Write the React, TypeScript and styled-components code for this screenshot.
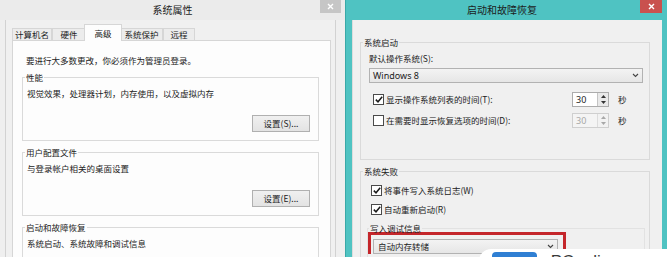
import React from "react";
import styled, { createGlobalStyle } from "styled-components";

const Global = createGlobalStyle`
  html, body { margin: 0; padding: 0; background: #ffffff; }
  body {
    font-family: "Noto Sans CJK SC", "Noto Sans", sans-serif;
    font-size: 8.5px;
    color: #222222;
  }
  * { box-sizing: border-box; }
`;

const Screen = styled.div`
  position: relative;
  display: flex;
  width: 667px;
  height: 257px;
  overflow: hidden;
  background: #f0f0f0;
`;

/* ---------- window chrome ---------- */

const LeftWindow = styled.div`
  width: 345px;
  flex: none;
  display: flex;
  flex-direction: column;
  background: #efefef;
`;

const RightWindow = styled.div`
  flex: 1;
  display: flex;
  flex-direction: column;
  background: #4fc3c2;
  border-left: 1px solid #3aa9a8;
  padding: 0 5px 0 6px;
`;

const TitleBar = styled.div<{ $active?: boolean }>`
  height: 20px;
  flex: none;
  display: grid;
  grid-template-columns: 1fr auto 1fr;
  align-items: center;
  padding-right: ${(p) => (p.$active ? 10 : 0)}px;
  background: ${(p) => (p.$active ? "#4fc3c2" : "#ebebeb")};
`;

const Title = styled.div`
  grid-column: 2;
  font-size: 10px;
  line-height: 12px;
  color: #1c1c1c;
`;

const Close = styled.div<{ $active?: boolean }>`
  grid-column: 3;
  justify-self: end;
  align-self: start;
  width: ${(p) => (p.$active ? 22 : 21)}px;
  height: 13px;
  margin-right: ${(p) => (p.$active ? -10 : 4)}px;
  display: flex;
  align-items: center;
  justify-content: center;
  background: ${(p) => (p.$active ? "#c9514e" : "#c6c6c6")};
`;

const CloseIcon = () => (
  <svg width="7" height="7" viewBox="0 0 7 7">
    <path d="M1 1 L6 6 M6 1 L1 6" stroke="#ffffff" strokeWidth="1.4" />
  </svg>
);

/* ---------- left: system properties ---------- */

const ClientFrame = styled.div`
  flex: 1;
  margin: 0 9px 0 5px;
  border-left: 1px solid #d2d2d2;
  border-right: 1px solid #d2d2d2;
  background: #f0f0f0;
  padding: 4px 4px 0 6px;
`;

const TabRow = styled.div`
  display: flex;
  align-items: flex-end;
  height: 16px;
`;

const Tab = styled.div<{ $selected?: boolean; $w: number }>`
  position: relative;
  width: ${(p) => p.$w}px;
  height: ${(p) => (p.$selected ? 17 : 12)}px;
  margin: ${(p) => (p.$selected ? "0 -2px -1px" : "0")};
  z-index: ${(p) => (p.$selected ? 1 : 0)};
  border: 1px solid #d6d6d6;
  border-bottom: none;
  background: ${(p) => (p.$selected ? "#fdfdfd" : "#ececec")};
  display: flex;
  align-items: ${(p) => (p.$selected ? "flex-start" : "center")};
  padding-top: ${(p) => (p.$selected ? 3 : 0)}px;
  justify-content: center;
  line-height: 11px;
  white-space: nowrap;
`;

const TabPanel = styled.div`
  height: 400px;
  background: #fdfdfd;
  border: 1px solid #d6d6d6;
  padding: 13px 11px 0 9px;
`;

const Intro = styled.div`
  line-height: 12px;
  padding-left: 4px;
  white-space: nowrap;
`;

const Group = styled.fieldset<{ $pad?: string }>`
  margin: 0;
  min-width: 0;
  border: 1px solid #dadada;
  padding: ${(p) => p.$pad ?? "4px 8px 8px 4px"};
`;

const GroupLabel = styled.legend<{ $lh?: number; $shift?: number }>`
  padding: 0 1px;
  margin-left: ${(p) => p.$shift ?? -2}px;
  line-height: ${(p) => p.$lh ?? 12}px;
  white-space: nowrap;
`;

const Spaced = styled.div<{ $top: number }>`
  margin-top: ${(p) => p.$top}px;
`;

const Line = styled.div`
  line-height: 12px;
  white-space: nowrap;
`;

const ButtonRow = styled.div`
  display: flex;
  justify-content: flex-end;
  margin-top: 16px;
`;

const Button = styled.div`
  width: 58px;
  height: 17px;
  border: 1px solid #b0b0b0;
  background: linear-gradient(#f0f0f0, #e3e3e3);
  display: flex;
  align-items: center;
  justify-content: center;
  line-height: 11px;
  white-space: nowrap;
`;

/* ---------- right: startup and recovery ---------- */

const Content = styled.div`
  flex: 1;
  background: #f0f0f0;
  border-left: 1px solid #dcdcdc;
  padding: 16px 12px 0 7px;
`;

const Select = styled.div<{ $latin?: boolean }>`
  height: 15px;
  border: 1px solid #b2b2b2;
  background: linear-gradient(#f3f3f3, #e6e6e6);
  display: flex;
  align-items: center;
  justify-content: space-between;
  padding: 0 3px 0 ${(p) => (p.$latin ? 3 : 4)}px;
  font-family: ${(p) =>
    p.$latin ? '"Noto Sans", "Noto Sans CJK SC", sans-serif' : "inherit"};
  font-size: ${(p) => (p.$latin ? 9 : 8.5)}px;
  line-height: 11px;
  white-space: nowrap;
`;

const Chevron = () => (
  <svg width="7" height="5" viewBox="0 0 7 5">
    <path d="M1 1 L3.5 3.5 L6 1" stroke="#444" strokeWidth="1.1" fill="none" />
  </svg>
);

const OptionRow = styled.div<{ $top: number }>`
  display: grid;
  grid-template-columns: 201px 37px auto;
  align-items: center;
  height: 15px;
  margin: ${(p) => p.$top}px 0 0 2px;
`;

const CheckLine = styled.label<{ $top?: number }>`
  display: flex;
  align-items: center;
  gap: 2px;
  height: 15px;
  margin: ${(p) => p.$top ?? 0}px 0 0 2px;
  line-height: 11px;
  white-space: nowrap;
`;

const Box = styled.span`
  width: 11px;
  height: 11px;
  flex: none;
  border: 1px solid #4a4a4a;
  background: #ffffff;
  display: flex;
  align-items: center;
  justify-content: center;
`;

const Check = ({ on }: { on: boolean }) => (
  <Box>
    {on && (
      <svg width="8" height="7" viewBox="0 0 8 7">
        <path d="M0.8 3.6 L3 5.8 L7.2 0.8" stroke="#1a1a1a" strokeWidth="1.5" fill="none" />
      </svg>
    )}
  </Box>
);

const Spinner = styled.div<{ $disabled?: boolean }>`
  display: flex;
  height: 15px;
  border: 1px solid ${(p) => (p.$disabled ? "#cfcfcf" : "#acacac")};
  background: ${(p) => (p.$disabled ? "#f4f4f4" : "#ffffff")};
`;

const SpinValue = styled.div<{ $disabled?: boolean }>`
  flex: 1;
  padding-left: 3px;
  display: flex;
  align-items: center;
  font-family: "Noto Sans", sans-serif;
  font-size: 9px;
  color: ${(p) => (p.$disabled ? "#a8a8a8" : "#1e1e1e")};
`;

const SpinButtons = styled.div<{ $disabled?: boolean }>`
  width: 11px;
  display: flex;
  flex-direction: column;
  align-items: center;
  justify-content: space-around;
  background: ${(p) => (p.$disabled ? "#f2f2f2" : "#e9e9e9")};
  border-left: 1px solid ${(p) => (p.$disabled ? "#dcdcdc" : "#c4c4c4")};
`;

const Arrows = ({ color }: { color: string }) => (
  <>
    <svg width="5" height="3" viewBox="0 0 5 3">
      <path d="M0 3 L2.5 0 L5 3 Z" fill={color} />
    </svg>
    <svg width="5" height="3" viewBox="0 0 5 3">
      <path d="M0 0 L2.5 3 L5 0 Z" fill={color} />
    </svg>
  </>
);

const Unit = styled.span`
  margin-left: 9px;
  line-height: 11px;
`;

const SubGroup = styled(Group)`
  margin: 6px -2px 0 -2px;
  border-color: #e2e2e2;
  border-bottom: none;
`;

const Annotation = styled.div`
  width: 198px;
  margin: -2px 0 0 -1px;
  border: 3px solid #c4262b;
  border-bottom: none;
  padding: 4px 5px 0 2px;
`;

/* ---------- watermark ---------- */

const Watermark = styled.div`
  position: absolute;
  left: 479px;
  top: 249px;
  width: 200px;
  height: 20px;
  background: #ffffff;
  border-top-left-radius: 12px;
  display: flex;
  align-items: flex-start;
  padding: 3px 0 0 13px;
`;

const Badge = styled.div`
  width: 45px;
  height: 12px;
  border-radius: 4px 4px 0 0;
  background: #2f7fd3;
`;

const WaterText = styled.div`
  display: flex;
  align-items: flex-start;
  margin: 0 0 0 3px;
  font-family: "Liberation Sans", Arial, sans-serif;
  font-size: 17px;
  line-height: 20px;
  color: #3a3a3a;
  gap: 6px;
`;

const Arrow = styled.span`
  color: #8a8a8a;
  font-size: 14px;
  margin-top: -3px;
`;

export default function App() {
  return (
    <>
      <Global />
      <Screen>
        <LeftWindow>
          <TitleBar>
            <Title>系统属性</Title>
            <Close>
              <CloseIcon />
            </Close>
          </TitleBar>
          <ClientFrame>
            <TabRow>
              <Tab $w={40}>计算机名</Tab>
              <Tab $w={34}>硬件</Tab>
              <Tab $w={38} $selected>
                高级
              </Tab>
              <Tab $w={43}>系统保护</Tab>
              <Tab $w={32}>远程</Tab>
            </TabRow>
            <TabPanel>
              <Intro>要进行大多数更改，你必须作为管理员登录。</Intro>
              <Spaced $top={5}>
                <Group>
                  <GroupLabel>性能</GroupLabel>
                  <Line>视觉效果，处理器计划，内存使用，以及虚拟内存</Line>
                  <ButtonRow>
                    <Button>设置(S)...</Button>
                  </ButtonRow>
                </Group>
              </Spaced>
              <Spaced $top={5}>
                <Group>
                  <GroupLabel>用户配置文件</GroupLabel>
                  <Line>与登录帐户相关的桌面设置</Line>
                  <ButtonRow>
                    <Button>设置(E)...</Button>
                  </ButtonRow>
                </Group>
              </Spaced>
              <Spaced $top={5}>
                <Group $pad="4px 8px 40px 4px">
                  <GroupLabel>启动和故障恢复</GroupLabel>
                  <Line>系统启动、系统故障和调试信息</Line>
                </Group>
              </Spaced>
            </TabPanel>
          </ClientFrame>
        </LeftWindow>

        <RightWindow>
          <TitleBar $active>
            <Title>启动和故障恢复</Title>
            <Close $active>
              <CloseIcon />
            </Close>
          </TitleBar>
          <Content>
            <Group $pad="4px 6px 31px 8px">
              <GroupLabel $shift={-6}>系统启动</GroupLabel>
              <Line>默认操作系统(S):</Line>
              <Spaced $top={4}>
                <Select $latin>
                  <span>Windows 8</span>
                  <Chevron />
                </Select>
              </Spaced>
              <OptionRow $top={9}>
                <CheckLine>
                  <Check on />
                  显示操作系统列表的时间(T):
                </CheckLine>
                <Spinner>
                  <SpinValue>30</SpinValue>
                  <SpinButtons>
                    <Arrows color="#333" />
                  </SpinButtons>
                </Spinner>
                <Unit>秒</Unit>
              </OptionRow>
              <OptionRow $top={6}>
                <CheckLine>
                  <Check on={false} />
                  在需要时显示恢复选项的时间(D):
                </CheckLine>
                <Spinner $disabled>
                  <SpinValue $disabled>30</SpinValue>
                  <SpinButtons $disabled>
                    <Arrows color="#a8a8a8" />
                  </SpinButtons>
                </Spinner>
                <Unit>秒</Unit>
              </OptionRow>
            </Group>
            <Spaced $top={5}>
              <Group $pad="6px 6px 20px 8px">
                <GroupLabel $shift={-6}>系统失败</GroupLabel>
                <CheckLine>
                  <Check on />
                  将事件写入系统日志(W)
                </CheckLine>
                <CheckLine $top={4}>
                  <Check on />
                  自动重新启动(R)
                </CheckLine>
                <SubGroup $pad="0 6px 20px 1px">
                  <GroupLabel $lh={11} $shift={0}>
                    写入调试信息
                  </GroupLabel>
                  <Annotation>
                    <Select>
                      <span>自动内存转储</span>
                      <Chevron />
                    </Select>
                  </Annotation>
                </SubGroup>
              </Group>
            </Spaced>
          </Content>
        </RightWindow>

        <Watermark>
          <Badge />
          <WaterText>
            <Arrow>›</Arrow>
            <span>PConline</span>
          </WaterText>
        </Watermark>
      </Screen>
    </>
  );
}
